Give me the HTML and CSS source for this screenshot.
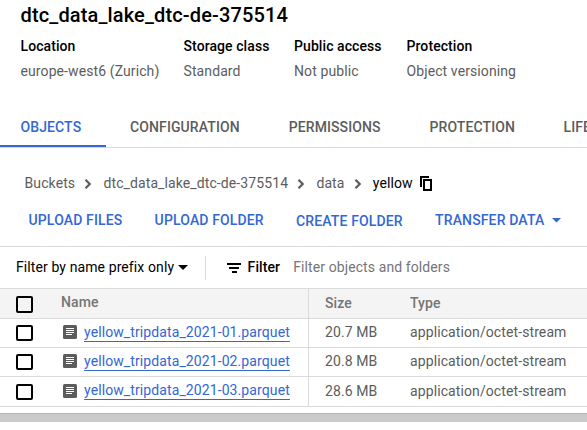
FILE: index.html
```html
<!DOCTYPE html>
<html lang="en">
<head>
<meta charset="utf-8">
<title>Bucket details</title>
<link rel="stylesheet" href="styles.css">
</head>
<body>
<header class="bucket">
  <h1 class="bucket-name">dtc_data_lake_dtc-de-375514</h1>
  <dl class="facts">
    <div><dt>Location</dt><dd>europe-west6 (Zurich)</dd></div>
    <div><dt>Storage class</dt><dd>Standard</dd></div>
    <div><dt>Public access</dt><dd>Not public</dd></div>
    <div><dt>Protection</dt><dd>Object versioning</dd></div>
  </dl>
</header>
<nav class="tabs">
  <a class="tab active">OBJECTS</a>
  <a class="tab">CONFIGURATION</a>
  <a class="tab">PERMISSIONS</a>
  <a class="tab">PROTECTION</a>
  <a class="tab">LIFE</a>
</nav>
<nav class="crumbs">
  <span>Buckets</span>
  <svg class="chev" viewBox="0 0 8 12"><path d="M1.5 1.8 5.7 6 1.5 10.2"/></svg>
  <span>dtc_data_lake_dtc-de-375514</span>
  <svg class="chev" viewBox="0 0 8 12"><path d="M1.5 1.8 5.7 6 1.5 10.2"/></svg>
  <span>data</span>
  <svg class="chev" viewBox="0 0 8 12"><path d="M1.5 1.8 5.7 6 1.5 10.2"/></svg>
  <span class="current">yellow</span>
  <svg class="copy" viewBox="0 0 13 15"><path d="M1 11V1h8M4 4h7v10H4z"/></svg>
</nav>
<div class="actions">
  <a>UPLOAD FILES</a>
  <a>UPLOAD FOLDER</a>
  <a class="create">CREATE FOLDER</a>
  <a>TRANSFER DATA<svg class="caret" viewBox="0 0 10 5"><path d="M0 0h9L4.500 4.500z"/></svg></a>
</div>
<div class="filter">
  <span class="prefix">Filter by name prefix only</span>
  <svg class="drop" viewBox="0 0 10 5"><path d="M0 0h10L5 5z"/></svg>
  <span class="divider"></span>
  <svg class="lines" viewBox="0 0 14 10"><path d="M0 0h14v2H0zM2 4h10v2H2zM5 8h5v2H5z"/></svg>
  <span class="label">Filter</span>
  <span class="hint">Filter objects and folders</span>
</div>
<div class="table">
  <div class="row head">
    <div class="cell name"><span class="box"></span><span class="title">Name</span></div>
    <div class="cell size"><span>Size</span></div><div class="cell type"><span>Type</span></div>
  </div>
  <div class="row">
    <div class="cell name"><span class="box"></span><svg class="doc" viewBox="0 0 14 14"><rect width="14" height="14" rx="1.500"/><path d="M3 3.500h8M3 5.500h8M3 7.500h8M3 9.500h6"/></svg><a class="file">yellow_tripdata_2021-01.parquet</a></div>
    <div class="cell size"><span>20.7 MB</span></div><div class="cell type"><span>application/octet-stream</span></div>
  </div>
  <div class="row">
    <div class="cell name"><span class="box"></span><svg class="doc" viewBox="0 0 14 14"><rect width="14" height="14" rx="1.500"/><path d="M3 3.500h8M3 5.500h8M3 7.500h8M3 9.500h6"/></svg><a class="file">yellow_tripdata_2021-02.parquet</a></div>
    <div class="cell size"><span>20.8 MB</span></div><div class="cell type"><span>application/octet-stream</span></div>
  </div>
  <div class="row last">
    <div class="cell name"><span class="box"></span><svg class="doc" viewBox="0 0 14 14"><rect width="14" height="14" rx="1.500"/><path d="M3 3.500h8M3 5.500h8M3 7.500h8M3 9.500h6"/></svg><a class="file">yellow_tripdata_2021-03.parquet</a></div>
    <div class="cell size"><span>28.6 MB</span></div><div class="cell type"><span>application/octet-stream</span></div>
  </div>
</div>
<div class="scrollbar"></div>
</body>
</html>
```
FILE: styles.css
```css
* { box-sizing: border-box; }
body {
  margin: 0;
  width: 587px;
  height: 430px;
  overflow: hidden;
  background: #fff;
  color: #5c5c5c;
  font: 14px/20px Roboto, sans-serif;
  letter-spacing: .1px;
  white-space: nowrap;
}
svg { display: block; flex: none; }
.bucket { height: 107px; padding: 3px 0 0 20.500px; }
.bucket-name { margin: 0; font-size: 20px; line-height: 24px; font-weight: 500; letter-spacing: .14px; color: #000; }
.facts { display: grid; grid-template-columns: 163px 110.500px 112.500px auto; margin: 9px 0 0; }
.facts dt { color: #000; font-weight: 500; letter-spacing: .08px; }
.facts dd { margin: 5px 0 0; }
.tabs { display: flex; height: 41px; overflow: hidden; border-bottom: 1px solid #dadada; font-weight: 500; }
.tab { flex: none; height: 40px; padding: 10px 24.500px 0 24.400px; }
.tab:last-child { padding: 10px 0 0 24px; }
.tab.active { width: 105.700px; padding-left: 20.500px; color: #3367d6; border-bottom: 2px solid #3367d6; }
.crumbs { display: flex; align-items: center; height: 20px; margin-top: 25px; padding-left: 24.500px; }
.chev { width: 8px; height: 12px; margin: 2px 11.300px 0 9px; fill: none; stroke: #5c5c5c; stroke-width: 2.200; }
.current { color: #000; }
.copy { width: 13px; height: 15px; margin: 1px 0 0 7px; fill: none; stroke: #000; stroke-width: 2; }
.actions { display: flex; gap: 32.200px; height: 54px; padding: 17px 0 0 28.500px; border-bottom: 1px solid #dadada; color: #3367d6; font-weight: 500; letter-spacing: .14px; }
.actions a { display: flex; align-items: center; height: 20px; }
.actions .create { margin-top: 1px; }
.caret { width: 10px; height: 5px; margin-left: 8px; fill: #3367d6; }
.filter { display: flex; align-items: center; height: 41px; padding-left: 16px; color: #000; }
.prefix, .label, .hint { margin-top: -1px; }
.drop { width: 10px; height: 5px; margin-left: 4px; }
.divider { width: 1px; height: 24px; margin-left: 17px; background: #dadada; }
.lines { width: 14px; height: 10px; margin-left: 21px; }
.label { margin-left: 6.500px; font-weight: 500; }
.hint { margin-left: 13px; color: #757575; }
.row { display: grid; grid-template-columns: 309px 86px 192px; height: 29px; border-bottom: 1px solid #dadada; }
.row.head { height: 31px; border-top: 1px solid #dadada; background: #f4f4f4; font-weight: 500; color: #757575; }
.row.last { height: 30px; }
.cell { display: flex; align-items: center; }
.name { padding-left: 16px; border-right: 1px solid #dadada; }
.size { padding-left: 16px; padding-bottom: 2px; }
.type { padding-left: 15px; padding-bottom: 2px; }
.box { width: 17px; height: 16px; border: 2px solid #000; border-radius: 2px; }
.head .box { height: 17px; margin-top: 2px; }
.last .box { margin-top: 1px; }
.title { margin-left: 28px; margin-top: -3px; }
.doc { width: 14px; height: 14px; margin: -2px 7px 0 30px; }
.last .doc { margin-top: -1px; }
.doc rect { fill: #5c5c5c; }
.doc path { stroke: #fff; stroke-width: 1; }
.file { height: 18px; margin-top: -1px; line-height: 17px; color: #3367d6; border-bottom: 1px solid #3367d6; }
.scrollbar { height: 9px; margin-top: 6px; background: #cacaca; border-top: 1px solid #b5b5b5; }
```
